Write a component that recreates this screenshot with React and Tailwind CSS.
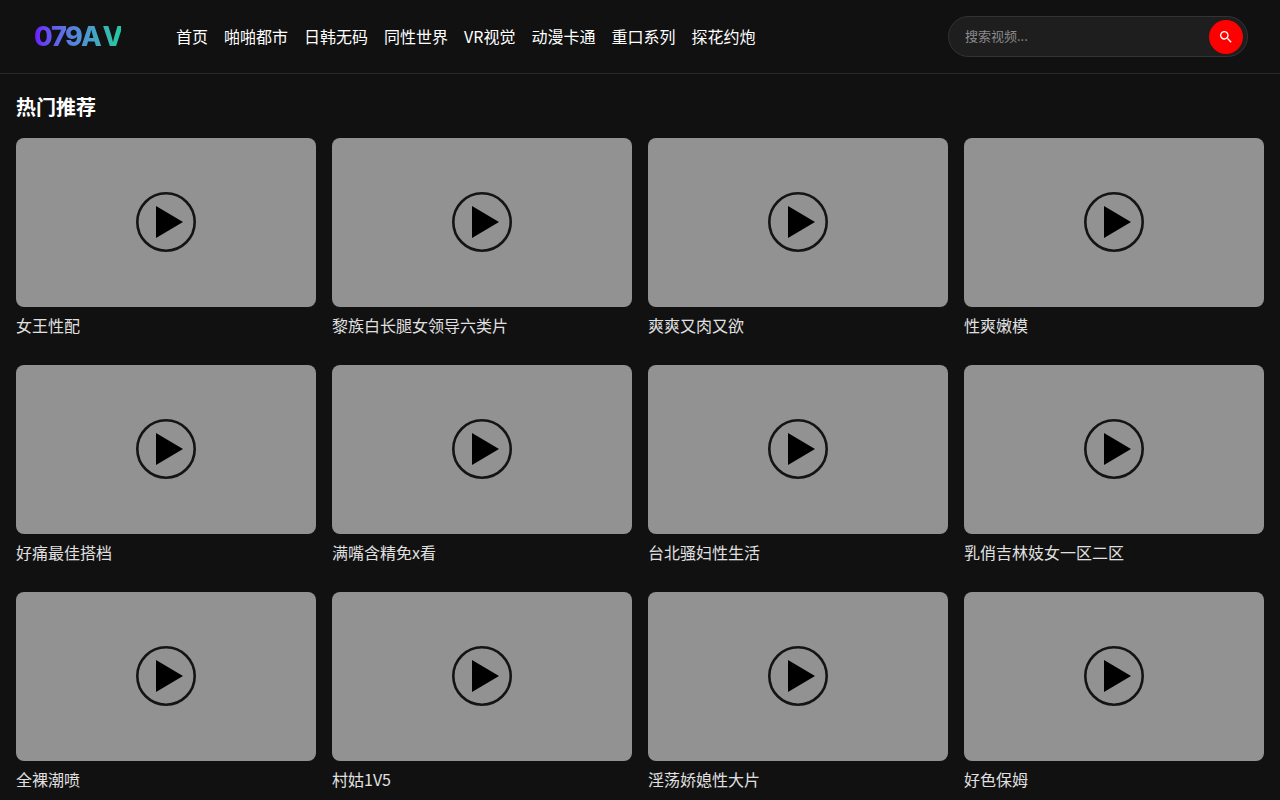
import React from 'react';

const navItems = ['首页', '啪啪都市', '日韩无码', '同性世界', 'VR视觉', '动漫卡通', '重口系列', '探花约炮'];

const videos = [
  '女王性配', '黎族白长腿女领导六类片', '爽爽又肉又欲', '性爽嫩模',
  '好痛最佳搭档', '满嘴含精免x看', '台北骚妇性生活', '乳俏吉林妓女一区二区',
  '全裸潮喷', '村姑1V5', '淫荡娇媳性大片', '好色保姆',
];

const PlayIcon = () => (
  <svg className="w-[60px] h-[60px] blur-[0.4px]" viewBox="0 0 60 60" fill="none">
    <circle cx="30" cy="30" r="28.7" stroke="#141414" strokeWidth="2.6" />
    <path d="M20 14 L47 30 L20 46 Z" fill="#000" />
  </svg>
);

const VideoCard = ({ title }) => (
  <a href="#" className="block">
    <div className="h-[169px] pb-[2px] rounded-lg bg-[#929292] flex items-center justify-center">
      <PlayIcon />
    </div>
    <p className="mt-[6px] text-base leading-[24px] text-[#e0e0e0]">{title}</p>
  </a>
);

const App = () => {
  return (
    <div className="h-[800px] overflow-hidden bg-[#111111] font-['Noto_Sans_CJK_SC','Liberation_Sans',sans-serif]">
      <header className="h-[74px] border-b border-[#2a2a2a] flex items-center pl-[34px] pr-8">
        <div className="w-[142px] font-['Inter',sans-serif] text-[27px] leading-none font-extrabold tracking-[-1.8px] [font-kerning:none]">
          <span className="bg-gradient-to-r from-[#6a0dff] to-[#20c9a0] bg-clip-text text-transparent">
            079A<span className="ml-[2.5px]">V</span>
          </span>
        </div>
        <nav className="flex gap-4 pb-[2px] text-base text-white">
          {navItems.map((item) => (
            <a key={item} href="#">{item}</a>
          ))}
        </nav>
        <div className="ml-auto w-[300px] h-[41px] rounded-full border border-[#333333] bg-[#1e1e1e] flex items-center pl-4 pr-1">
          <input
            type="text"
            placeholder="搜索视频..."
            className="flex-1 min-w-0 pb-[2px] bg-transparent text-[13px] text-white outline-none placeholder:text-[#8a8a8a]"
          />
          <button className="w-[34px] h-[34px] rounded-full bg-[#ff0000] flex items-center justify-center">
            <svg className="w-4 h-4" viewBox="0 0 24 24" fill="#fff">
              <path d="M15.5 14h-.79l-.28-.27A6.47 6.47 0 0 0 16 9.5 6.5 6.5 0 1 0 9.5 16c1.61 0 3.09-.59 4.23-1.57l.27.28v.79l5 4.99L20.49 19l-4.99-5zm-6 0C7.01 14 5 11.99 5 9.5S7.01 5 9.5 5 14 7.01 14 9.5 11.99 14 9.5 14z" />
            </svg>
          </button>
        </div>
      </header>

      <main className="px-4 pt-[18px]">
        <h2 className="text-xl leading-[30px] font-bold text-white mb-4">热门推荐</h2>
        <div className="grid grid-cols-4 gap-x-4 gap-y-[28px]">
          {videos.map((title) => (
            <VideoCard key={title} title={title} />
          ))}
        </div>
      </main>
    </div>
  );
};

export default App;
